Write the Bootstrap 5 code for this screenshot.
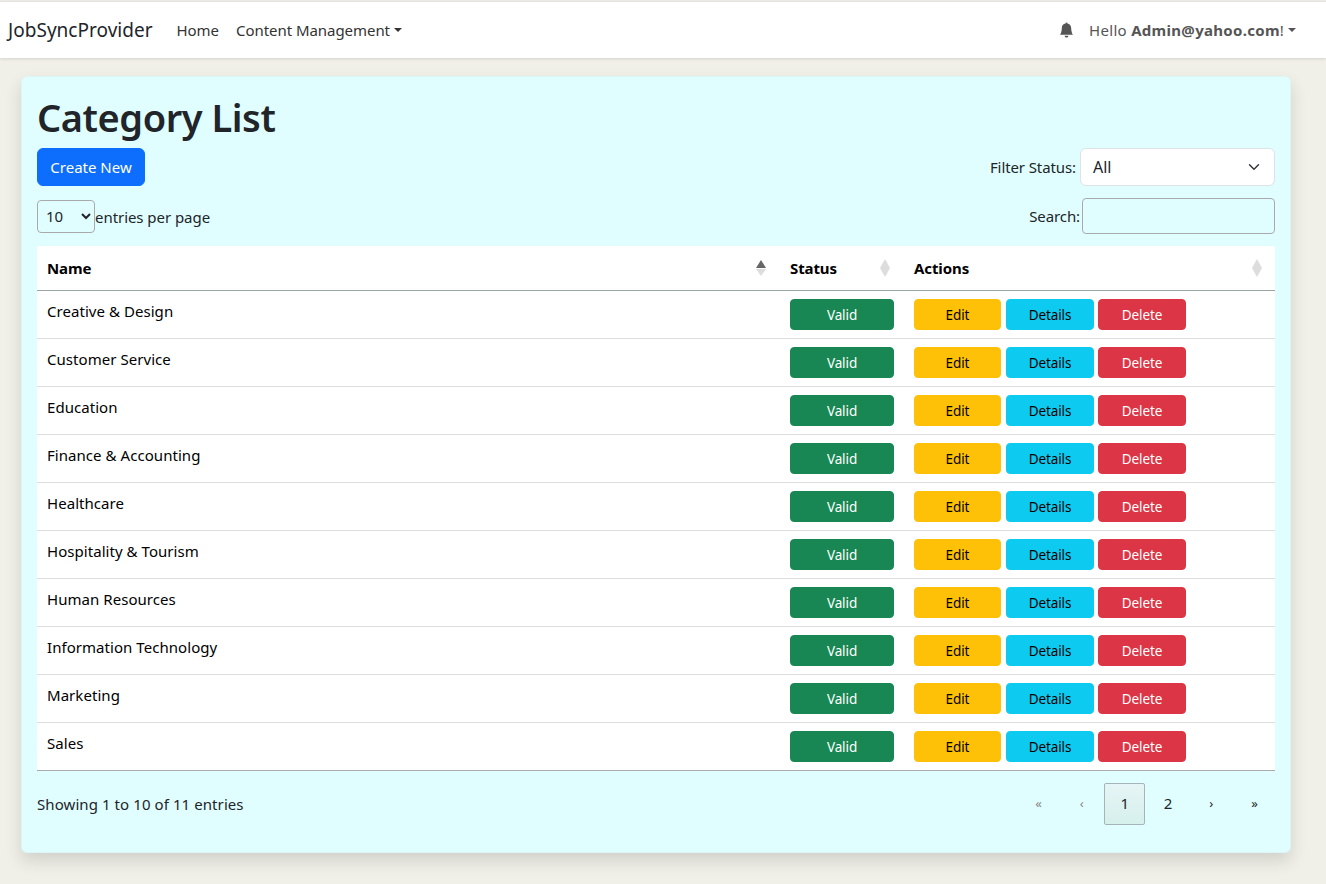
<!DOCTYPE html>
<html lang="en">
<head>
<meta charset="utf-8">
<title>Category List</title>
<link href="https://cdn.jsdelivr.net/npm/bootstrap@5.3.0/dist/css/bootstrap.min.css" rel="stylesheet">
<style>
body{background:#f0f0e8;font-family:"Noto Sans","Open Sans",sans-serif;font-size:15px;color:#212529;min-height:884px;letter-spacing:-.1px}
.top-nav{margin-top:1px;border-top:1px solid #e4e4e4;height:57px;padding:0 8px;box-shadow:0 1px 3px rgba(0,0,0,.12)}
.top-nav .navbar-brand{font-size:19px;padding:0;margin-right:16px;color:#212529;letter-spacing:.02px}
.top-nav .nav-link{color:#333;font-size:15px;padding:8px;letter-spacing:-.05px}
.top-nav .nav-item + .nav-item .nav-link{padding-left:9px}
.user-zone{padding-right:22px}
.hello{color:#555;font-size:15px;letter-spacing:.3px}
.hello b{letter-spacing:.3px}
.bell{width:15px;height:16px;fill:#555;margin-right:15px}
.wrap{padding:18px 35px 0 21px}
.panel{background:#e0feff;border:1px solid #dcf6f6;border-radius:6px;padding:15px;height:777px}
.panel h1{font-size:38px;font-weight:600;line-height:52px;margin:-1px 0 5px;letter-spacing:-.45px}
.btn-create{font-size:15px;height:38px;width:108px;padding:0;border-radius:6px;display:flex;align-items:center;justify-content:center;letter-spacing:0}
.status-filter{width:195px;height:38px;font-size:16px;margin-left:4px;padding-left:12px;letter-spacing:0}
.page-size{width:58px;height:33px;font-size:15px;padding:0 0 0 4px;background-color:transparent;border:1px solid #aaa;border-radius:4px;color:#212529}
.entries-text{padding-top:2px;letter-spacing:-.05px}
.search-box{width:193px;height:36px;background:transparent;border:1px solid #aaa;border-radius:4px;margin-left:2px}
.bar-two{margin-top:12px;margin-bottom:12px;height:36px}
.cat-table{table-layout:fixed;background:#fff;margin:0;width:100%;border-bottom:1px solid #aaa}
.cat-table th{font-weight:700;color:#000;height:44px;padding:0 10px;vertical-align:middle;border-bottom:1px solid #9aa5a5;position:relative;font-size:15px}
.cat-table td{height:48px;padding:8px 10px;vertical-align:top;color:#000;border-bottom:1px solid #ddd;line-height:24px;letter-spacing:.05px}
.cat-table tr:last-child td{border-bottom:0;height:47px}
.sort-mark{position:absolute;right:13px;top:13px;width:12px;height:18px}
.cat-table th:last-child .sort-mark{right:12px}
.act{font-size:13.5px;height:31px;padding:2px 0 0;display:inline-flex;align-items:center;justify-content:center;border-radius:4px;letter-spacing:-.1px}
.act-status{width:104px}
.act-edit{width:87px}
.act-more{width:88px}
.act-row{display:flex;gap:5px}
.act-row .act-del{margin-left:-1px}
.foot-row{margin-top:12px;height:42px}
.foot-text{padding-top:2px;letter-spacing:.08px}
.pager{margin:0;gap:2px}
.pager .page-link,.pager .page-item:not(:first-child) .page-link{width:41.2px;height:42px;padding:0;margin:0;display:flex;align-items:center;justify-content:center;background:transparent;border:1px solid transparent;border-radius:2px;color:#212529;font-size:15px}
.pager .page-item.active .page-link{border-color:#a5b5b5;background:linear-gradient(#e6f5f5,#d6f0ec);color:#212529}
.pager .page-item.disabled .page-link{color:#888;font-size:13px}
.pager .page-item.glyph .page-link{font-size:13px}
</style>
</head>
<body>
<nav class="navbar navbar-expand bg-white top-nav">
  <div class="d-flex align-items-center w-100">
    <a class="navbar-brand" href="#">JobSyncProvider</a>
    <ul class="navbar-nav">
      <li class="nav-item"><a class="nav-link" href="#">Home</a></li>
      <li class="nav-item"><a class="nav-link dropdown-toggle" href="#">Content Management</a></li>
    </ul>
    <div class="ms-auto d-flex align-items-center user-zone">
      <svg class="bell" viewBox="0 0 16 16" aria-hidden="true"><path d="M8 16a2 2 0 0 0 2-2H6a2 2 0 0 0 2 2zm.995-14.901a1 1 0 1 0-1.99 0A5.002 5.002 0 0 0 3 6c0 1.098-.5 6-2 7h14c-1.5-1-2-5.902-2-7 0-2.42-1.72-4.44-4.005-4.901z"/></svg>
      <a class="hello text-decoration-none dropdown-toggle" href="#">Hello <b>Admin@yahoo.com</b>!</a>
    </div>
  </div>
</nav>
<div class="wrap">
  <div class="card panel shadow">
    <h1>Category List</h1>
    <div class="d-flex justify-content-between align-items-center">
      <a href="#" class="btn btn-primary btn-create">Create New</a>
      <div class="d-flex align-items-center">
        <label for="flt">Filter Status:</label>
        <select id="flt" class="form-select status-filter"><option>All</option></select>
      </div>
    </div>
    <div class="d-flex justify-content-between align-items-center bar-two">
      <div class="d-flex align-items-center">
        <select class="page-size"><option>10</option></select>
        <span class="entries-text">entries per page</span>
      </div>
      <div class="d-flex align-items-center">
        <label for="srch">Search:</label>
        <input id="srch" class="search-box" type="search">
      </div>
    </div>
    <table class="table cat-table">
      <colgroup><col style="width:743px"><col style="width:124px"><col></colgroup>
      <thead>
        <tr>
          <th>Name<svg class="sort-mark" viewBox="0 0 12 18"><path d="M6 1l5 8H1z" fill="#666"/><path d="M6 17l5-7H1z" fill="#ddd"/></svg></th>
          <th>Status<svg class="sort-mark" viewBox="0 0 12 18"><path d="M6 0l5 9H1z" fill="#ddd"/><path d="M6 18l5-9H1z" fill="#ddd"/></svg></th>
          <th>Actions<svg class="sort-mark" viewBox="0 0 12 18"><path d="M6 0l5 9H1z" fill="#ddd"/><path d="M6 18l5-9H1z" fill="#ddd"/></svg></th>
        </tr>
      </thead>
      <tbody>
        <tr><td>Creative &amp; Design</td><td><a href="#" class="btn btn-success act act-status">Valid</a></td><td><div class="act-row"><a href="#" class="btn btn-warning act act-edit">Edit</a><a href="#" class="btn btn-info act act-more">Details</a><a href="#" class="btn btn-danger act act-more act-del">Delete</a></div></td></tr>
        <tr><td>Customer Service</td><td><a href="#" class="btn btn-success act act-status">Valid</a></td><td><div class="act-row"><a href="#" class="btn btn-warning act act-edit">Edit</a><a href="#" class="btn btn-info act act-more">Details</a><a href="#" class="btn btn-danger act act-more act-del">Delete</a></div></td></tr>
        <tr><td>Education</td><td><a href="#" class="btn btn-success act act-status">Valid</a></td><td><div class="act-row"><a href="#" class="btn btn-warning act act-edit">Edit</a><a href="#" class="btn btn-info act act-more">Details</a><a href="#" class="btn btn-danger act act-more act-del">Delete</a></div></td></tr>
        <tr><td>Finance &amp; Accounting</td><td><a href="#" class="btn btn-success act act-status">Valid</a></td><td><div class="act-row"><a href="#" class="btn btn-warning act act-edit">Edit</a><a href="#" class="btn btn-info act act-more">Details</a><a href="#" class="btn btn-danger act act-more act-del">Delete</a></div></td></tr>
        <tr><td>Healthcare</td><td><a href="#" class="btn btn-success act act-status">Valid</a></td><td><div class="act-row"><a href="#" class="btn btn-warning act act-edit">Edit</a><a href="#" class="btn btn-info act act-more">Details</a><a href="#" class="btn btn-danger act act-more act-del">Delete</a></div></td></tr>
        <tr><td>Hospitality &amp; Tourism</td><td><a href="#" class="btn btn-success act act-status">Valid</a></td><td><div class="act-row"><a href="#" class="btn btn-warning act act-edit">Edit</a><a href="#" class="btn btn-info act act-more">Details</a><a href="#" class="btn btn-danger act act-more act-del">Delete</a></div></td></tr>
        <tr><td>Human Resources</td><td><a href="#" class="btn btn-success act act-status">Valid</a></td><td><div class="act-row"><a href="#" class="btn btn-warning act act-edit">Edit</a><a href="#" class="btn btn-info act act-more">Details</a><a href="#" class="btn btn-danger act act-more act-del">Delete</a></div></td></tr>
        <tr><td>Information Technology</td><td><a href="#" class="btn btn-success act act-status">Valid</a></td><td><div class="act-row"><a href="#" class="btn btn-warning act act-edit">Edit</a><a href="#" class="btn btn-info act act-more">Details</a><a href="#" class="btn btn-danger act act-more act-del">Delete</a></div></td></tr>
        <tr><td>Marketing</td><td><a href="#" class="btn btn-success act act-status">Valid</a></td><td><div class="act-row"><a href="#" class="btn btn-warning act act-edit">Edit</a><a href="#" class="btn btn-info act act-more">Details</a><a href="#" class="btn btn-danger act act-more act-del">Delete</a></div></td></tr>
        <tr><td>Sales</td><td><a href="#" class="btn btn-success act act-status">Valid</a></td><td><div class="act-row"><a href="#" class="btn btn-warning act act-edit">Edit</a><a href="#" class="btn btn-info act act-more">Details</a><a href="#" class="btn btn-danger act act-more act-del">Delete</a></div></td></tr>
      </tbody>
    </table>
    <div class="d-flex justify-content-between align-items-center foot-row">
      <div class="foot-text">Showing 1 to 10 of 11 entries</div>
      <ul class="pagination pager">
        <li class="page-item disabled"><a class="page-link" href="#">«</a></li>
        <li class="page-item disabled"><a class="page-link" href="#">‹</a></li>
        <li class="page-item active"><a class="page-link" href="#">1</a></li>
        <li class="page-item"><a class="page-link" href="#">2</a></li>
        <li class="page-item glyph"><a class="page-link" href="#">›</a></li>
        <li class="page-item glyph"><a class="page-link" href="#">»</a></li>
      </ul>
    </div>
  </div>
</div>
<script src="https://cdn.jsdelivr.net/npm/bootstrap@5.3.0/dist/js/bootstrap.bundle.min.js"></script>
</body>
</html>
